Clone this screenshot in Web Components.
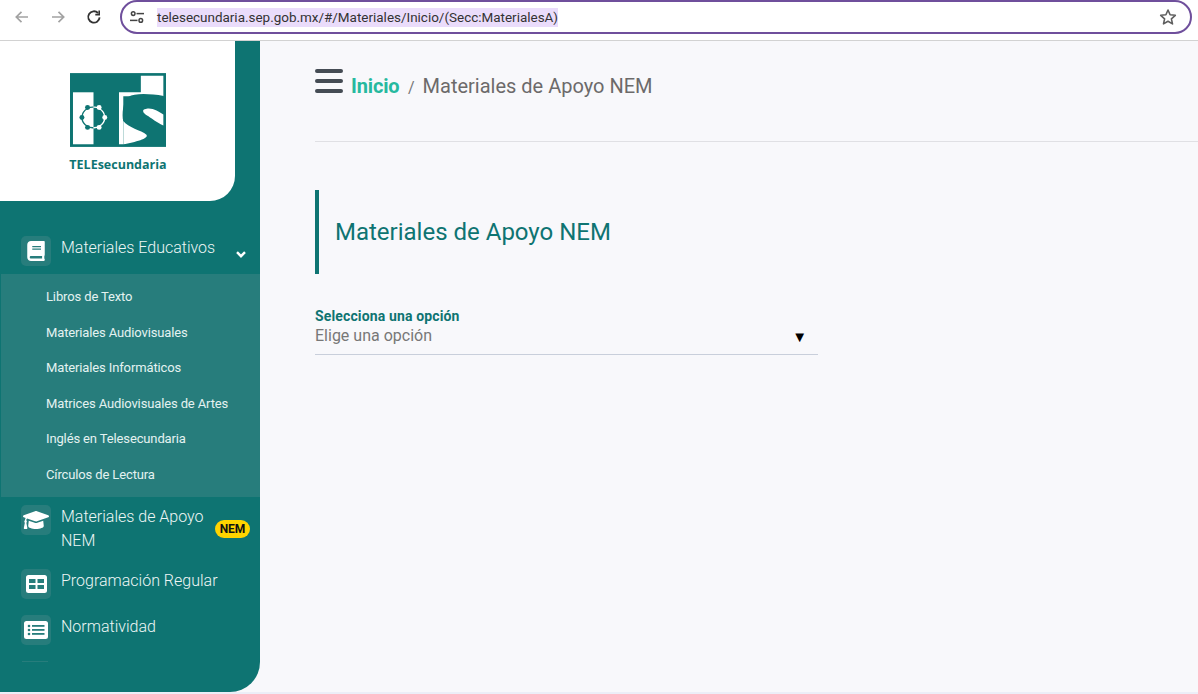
<!DOCTYPE html>
<html lang="es">
<head>
<meta charset="utf-8">
<title>Telesecundaria</title>
<style>
html,body{margin:0;height:100%;background:#f8f8fb;overflow:hidden}
body{font-family:Roboto,"Liberation Sans",sans-serif;display:flex;flex-direction:column;height:694px}
.row{display:flex;flex:1;min-height:0}
.foot{height:2px;background:#eceef7;flex:none}
svg{display:block}
</style>
</head>
<body>
<template id="t-browser">
<style>
:host{display:flex;flex:none;height:40px;background:#fff;border-bottom:1px solid #d2d2d2;align-items:flex-start;font-family:Roboto,sans-serif}
.nav{display:flex;width:120px;height:34px;align-items:center;padding-left:13px;box-sizing:border-box;gap:18px}
.omni{flex:1;margin-right:6px;height:34px;box-sizing:border-box;border:2px solid #6f4f9c;border-radius:17px;display:flex;align-items:center;background:#fff;padding:0 13px 0 8px}
.tune{margin-right:13px;flex:none}
.url{flex:1;min-width:0}
.url span{background:#eadcfb;color:#333;font-size:13.46px;line-height:19px;display:inline-block}
svg{display:block;flex:none}
</style>
<div class="nav">
<svg width="18" height="18" viewBox="0 0 18 18" fill="none" stroke="#a2a2a2" stroke-width="1.7"><path d="M15 9H3.500M8.500 3.800 3.300 9l5.200 5.200"/></svg>
<svg width="18" height="18" viewBox="0 0 18 18" fill="none" stroke="#a2a2a2" stroke-width="1.7"><path d="M3 9h11.500M9.500 3.800 14.700 9l-5.200 5.200"/></svg>
<svg width="18" height="18" viewBox="0 0 18 18" fill="none" stroke="#333" stroke-width="1.8"><path d="M14.600 9.400A5.700 5.700 0 1 1 13 5"/><path d="M14.200 2.600v4H10.300" stroke-width="1.600"/></svg>
</div>
<div class="omni">
<svg class="tune" width="14" height="14" viewBox="0 0 14 14" fill="none" stroke="#444" stroke-width="1.500"><circle cx="3.200" cy="3.600" r="1.800"/><path d="M6.500 3.600H14"/><circle cx="10.800" cy="10.400" r="1.800"/><path d="M0 10.400h7.500"/></svg>
<div class="url"><span><slot></slot></span></div>
<svg width="18" height="18" viewBox="0 0 18 18" fill="none" stroke="#5f5f5f" stroke-width="1.600" stroke-linejoin="round"><path d="m9 2 2.100 4.800 5.200.5-3.900 3.500 1.100 5.100L9 13.200l-4.500 2.700 1.100-5.100-3.900-3.500 5.200-.5z"/></svg>
</div>
</template>

<template id="t-logo">
<style>
:host{display:flex;flex:none;flex-direction:column;align-items:center;width:235px;height:160px;box-sizing:border-box;padding-top:32px;background:#fff;border-radius:0 0 25px 0}
svg{display:block}
.cap{font-family:"Open Sans","Noto Sans",sans-serif;font-weight:700;font-size:12.5px;line-height:16px;color:#0e7472;margin-top:10px;white-space:nowrap;margin-left:1px}
</style>
<svg width="96" height="74" viewBox="0 0 290 223">
<rect width="290" height="223" fill="#0e7472"/>
<rect x="9" y="58" width="62" height="157" fill="#fff"/>
<path d="M148 58h66V8h68v62H161v145h-13z" fill="#fff"/>
<path d="M283 69C240 62 195 60 176 72 160 84 156 125 161 145v70h122z" fill="#0e7472"/>
<path d="M161 145c14 20 54 28 70 41 8 12-34 22-70 29z" fill="#fff"/>
<path d="M282 125c-12-8-28-18-44-18-9 0-18 3-17 8 1 8 12 12 26 22 12 9 25 17 35 21z" fill="#fff"/>
<g fill="none" stroke-width="4">
<path d="M71 103A32 32 0 0 0 53 107 32 32 0 0 0 36 134 32 32 0 0 0 53 161 32 32 0 0 0 71 165" stroke="#0e7472"/>
<path d="M71 103A32 32 0 0 1 88 107 32 32 0 0 1 105 134 32 32 0 0 1 88 161 32 32 0 0 1 71 165" stroke="#fff"/>
</g>
<g fill="#0e7472"><circle cx="53" cy="104" r="7.500"/><circle cx="36" cy="134" r="7.500"/><circle cx="53" cy="164" r="7.500"/></g>
<g fill="#fff"><circle cx="88" cy="104" r="7.500"/><circle cx="105" cy="134" r="7.500"/><circle cx="88" cy="164" r="7.500"/></g>
</svg>
<div class="cap"><slot></slot></div>
</template>

<template id="t-side">
<style>
:host{display:flex;flex:none;flex-direction:column;width:260px;background:#0e7472;border-radius:0 0 30px 0;overflow:hidden}
.menu{padding-top:26px;display:flex;flex-direction:column}
</style>
<slot name="logo"></slot>
<div class="menu"><slot></slot></div>
</template>

<template id="t-item">
<style>
:host{display:flex;align-items:flex-start;padding:8px 10px 8px 21px;color:#edf6f5;font-size:16px;font-weight:300;line-height:24px}
.ico{flex:none;width:30px;height:30px;margin:1px 10px -1px 0;border-radius:5px;background:#277d7c;display:flex;align-items:center;justify-content:center}
.txt{flex:1;min-width:0;margin:1px 0 -1px}
::slotted(.nem){flex:none;align-self:center;height:18px;width:35px;margin-top:2px;border-radius:9px;background:#ffd400;color:#111;font-size:12px;font-weight:700;line-height:18px;text-align:center}
::slotted(.chev){flex:none;margin:16px 4px 0 0}
</style>
<div class="ico"><slot name="icon"></slot></div>
<div class="txt"><slot></slot></div>
<slot name="end"></slot>
</template>

<template id="t-rule">
<style>:host{display:block;height:1px;margin:9px 212px 0 22px;background:#277d7c}</style>
</template>

<template id="t-sub">
<style>
:host{display:flex;flex-direction:column;margin:1px 0 -1px 1px;padding:5px 0;background:#277d7c}
</style>
<slot></slot>
</template>

<template id="t-subitem">
<style>
:host{display:block;height:35.5px;line-height:35.5px;padding-left:45px;font-size:13px;letter-spacing:-.13px;color:#e4f2f1;white-space:nowrap}
</style>
<slot></slot>
</template>

<template id="t-crumbs">
<style>
:host{display:flex;align-items:flex-start;height:101px;box-sizing:border-box;padding-top:28px;border-bottom:1px solid #e0e0e4;flex:none}
.burger{display:flex;flex-direction:column;gap:6px;width:28px;margin-right:8px}
.burger i{display:block;height:4px;border-radius:2px;background:#454c54}
.c{display:flex;align-items:baseline;font-size:20px;line-height:24px;margin-top:5px;color:#6c6a6a}
.home{color:#26b99f;font-weight:700;letter-spacing:-.15px}
.sep{font-size:16px;margin:0 8px 0 8.500px;color:#777}
</style>
<div class="burger"><i></i><i></i><i></i></div>
<div class="c"><span class="home"><slot name="home"></slot></span><span class="sep">/</span><span><slot></slot></span></div>
</template>

<template id="t-title">
<style>
:host{display:flex;align-items:center;flex:none;height:84px;margin-top:48px;border-left:4px solid #0e7472;padding-left:16px;font-size:24px;color:#0e7472}
</style>
<slot></slot>
</template>

<template id="t-select">
<style>
:host{display:block;flex:none;width:503px;margin-top:34px}
.l{font-size:14px;font-weight:700;line-height:17px;letter-spacing:.14px;color:#0e7472}
.b{display:flex;justify-content:space-between;align-items:center;height:30px;padding-bottom:8px;box-sizing:border-box;line-height:22px;font-size:16px;color:#777;border-bottom:1px solid #c9cfdb}
.a{font-size:15px;color:#000;margin-right:11px;margin-top:2px}
</style>
<div class="l"><slot name="label"></slot></div>
<div class="b"><span><slot></slot></span><span class="a">▼</span></div>
</template>

<template id="t-main">
<style>
:host{display:flex;flex-direction:column;flex:1;min-width:0;padding-left:55px}
</style>
<slot></slot>
</template>

<browser-bar>telesecundaria.sep.gob.mx/#/Materiales/Inicio/(Secc:MaterialesA)</browser-bar>
<div class="row">
<side-nav>
<logo-box slot="logo">TELEsecundaria</logo-box>
<nav-item>
<svg slot="icon" width="18" height="20" viewBox="0 0 448 512" fill="#fff"><path d="M448 360V24c0-13.300-10.700-24-24-24H96C43 0 0 43 0 96v320c0 53 43 96 96 96h328c13.300 0 24-10.700 24-24v-16c0-7.500-3.500-14.300-8.900-18.700-4.200-15.400-4.200-59.300 0-74.700 5.400-4.300 8.900-11.100 8.900-18.600zM128 134c0-3.300 2.700-6 6-6h212c3.300 0 6 2.700 6 6v20c0 3.300-2.700 6-6 6H134c-3.300 0-6-2.700-6-6v-20zm0 64c0-3.300 2.700-6 6-6h212c3.300 0 6 2.700 6 6v20c0 3.300-2.700 6-6 6H134c-3.300 0-6-2.700-6-6v-20zm253.400 250H96c-17.700 0-32-14.300-32-32 0-17.600 14.400-32 32-32h285.400c-1.900 17.100-1.900 46.900 0 64z"/></svg>
Materiales Educativos
<svg class="chev" slot="end" width="10" height="7" viewBox="0 0 10 7" fill="none" stroke="#fff" stroke-width="2.400"><path d="M1 1.200 5 5.200l4-4"/></svg>
</nav-item>
<sub-menu>
<sub-item>Libros de Texto</sub-item>
<sub-item>Materiales Audiovisuales</sub-item>
<sub-item>Materiales Informáticos</sub-item>
<sub-item>Matrices Audiovisuales de Artes</sub-item>
<sub-item>Inglés en Telesecundaria</sub-item>
<sub-item>Círculos de Lectura</sub-item>
</sub-menu>
<nav-item>
<svg slot="icon" width="26" height="24" viewBox="0 0 640 512" preserveAspectRatio="none" fill="#fff"><path d="M622.340 153.200L343.400 67.500c-15.200-4.670-31.600-4.670-46.790 0L17.660 153.200c-23.540 7.230-23.540 38.360 0 45.590l48.630 14.940c-10.670 13.190-17.230 29.280-17.880 46.900C38.780 266.150 32 276.110 32 288c0 10.780 5.680 19.850 13.860 25.650L20.330 428.530C18.110 438.520 25.710 448 35.940 448h56.110c10.240 0 17.840-9.480 15.620-19.470L82.140 313.650C90.320 307.850 96 298.780 96 288c0-11.570-6.470-21.250-15.660-26.870.76-15.020 8.440-28.300 20.690-36.720L296.600 284.500c9.060 2.780 26.440 6.250 46.790 0l278.950-85.700c23.550-7.240 23.550-38.360 0-45.600zM352.790 315.090c-28.530 8.760-52.840 3.920-65.590 0l-145.020-44.550L128 384c0 35.350 85.960 64 192 64s192-28.650 192-64l-14.180-113.470-145.03 44.560z"/></svg>
Materiales de Apoyo NEM
<span class="nem" slot="end">NEM</span>
</nav-item>
<nav-item>
<svg slot="icon" width="21" height="18" viewBox="0 0 21 18"><path fill="#fff" fill-rule="evenodd" d="M2.500 0h16A2.500 2.500 0 0 1 21 2.500v13a2.500 2.500 0 0 1-2.500 2.500h-16A2.500 2.500 0 0 1 0 15.500v-13A2.500 2.500 0 0 1 2.500 0zM3 4v4h6.500V4zM11.500 4v4H18V4zM3 10v4h6.500v-4zM11.500 10v4H18v-4z"/></svg>
Programación Regular
</nav-item>
<nav-item>
<svg slot="icon" width="24" height="18" viewBox="0 0 24 18"><path fill="#fff" d="M2.500 0h19A2.500 2.500 0 0 1 24 2.500v13a2.500 2.500 0 0 1-2.500 2.500h-19A2.500 2.500 0 0 1 0 15.500v-13A2.500 2.500 0 0 1 2.500 0z"/><g fill="#277d7c"><circle cx="5" cy="5" r="1.300"/><circle cx="5" cy="9" r="1.300"/><circle cx="5" cy="13" r="1.300"/><rect x="8" y="4" width="12.500" height="1.800"/><rect x="8" y="8" width="12.500" height="1.800"/><rect x="8" y="12" width="12.500" height="1.800"/></g></svg>
Normatividad
</nav-item>
<nav-rule></nav-rule>
</side-nav>
<main-area>
<crumb-bar><span slot="home">Inicio</span>Materiales de Apoyo NEM</crumb-bar>
<section-title>Materiales de Apoyo NEM</section-title>
<select-field><span slot="label">Selecciona una opción</span>Elige una opción</select-field>
</main-area>
</div>
<div class="foot"></div>
<script>
const reg=(name,id)=>customElements.define(name,class extends HTMLElement{
  constructor(){super();this.attachShadow({mode:'open'}).appendChild(document.getElementById(id).content.cloneNode(true));}
});
[['browser-bar','t-browser'],['logo-box','t-logo'],['side-nav','t-side'],['nav-item','t-item'],['nav-rule','t-rule'],['sub-menu','t-sub'],['sub-item','t-subitem'],['crumb-bar','t-crumbs'],['section-title','t-title'],['select-field','t-select'],['main-area','t-main']].forEach(a=>reg(...a));
</script>
</body>
</html>
